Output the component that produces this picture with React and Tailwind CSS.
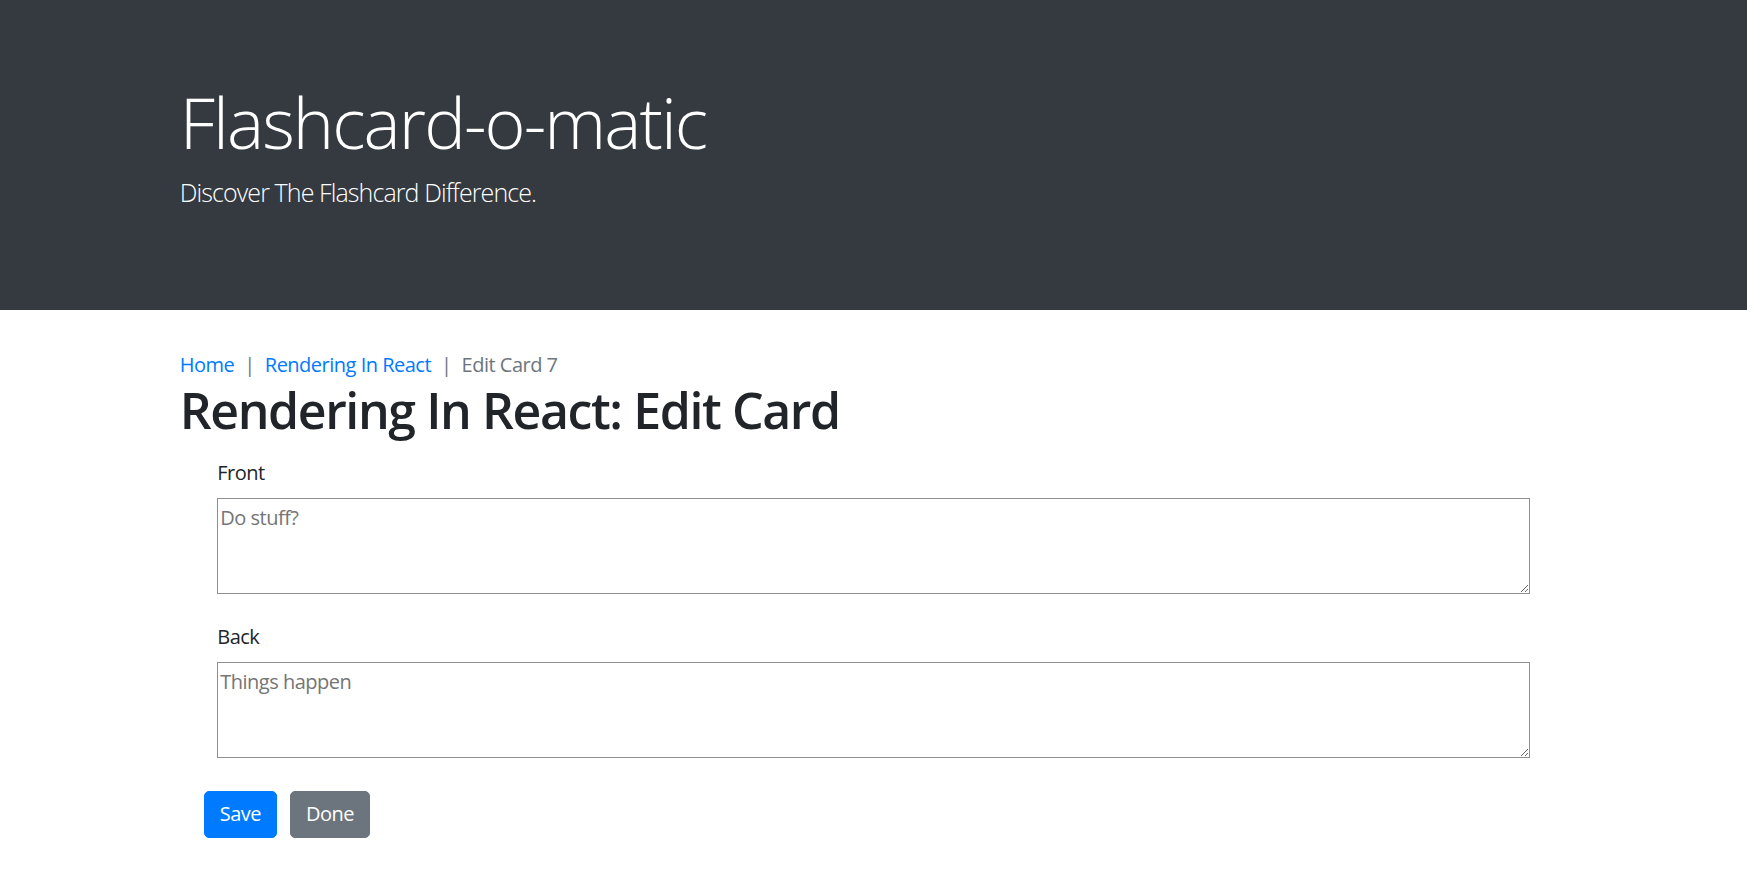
export default function App() {
    return (
        <div className="min-h-screen bg-white text-[#212529] text-[20px] leading-[1.5] tracking-[-0.5px] font-['Open_Sans','Noto_Sans',sans-serif]">
            {/* Jumbotron */}
            <div className="bg-[#343a40] pt-[80px] pb-[78px] mb-[40px]">
                <div className="max-w-[1425px] mx-auto px-[18.75px]">
                    <h1 className="text-white text-[70px] font-light leading-[84px] tracking-[-1.9px] mb-[10px]">
                        Flashcard-o-matic
                    </h1>
                    <p className="text-white text-[25px] font-light leading-[37.5px] tracking-[-0.9px] mb-[20px]">
                        Discover The Flashcard Difference.
                    </p>
                </div>
            </div>

            <div className="max-w-[1425px] mx-auto px-[18.75px]">
                {/* Breadcrumb */}
                <nav className="flex items-center leading-[30px]">
                    <a href="#" className="text-[#007bff]">Home</a>
                    <span className="text-[#6c757d] px-[10px]">|</span>
                    <a href="#" className="text-[#007bff]">Rendering In React</a>
                    <span className="text-[#6c757d] px-[10px]">|</span>
                    <span className="text-[#6c757d]">Edit Card 7</span>
                </nav>

                <h2 className="text-[50px] font-semibold leading-[60px] tracking-[-1.4px] mb-[9px]">
                    Rendering In React: Edit Card
                </h2>

                <form className="pt-[9px]">
                    <div className="mx-[37.5px] mb-[28px]">
                        <label htmlFor="front" className="block mb-[10px] leading-[30px]">Front</label>
                        <textarea
                            id="front"
                            rows={3}
                            placeholder="Do stuff?"
                            className="block w-full h-[96px] border border-[#8f8f8f] px-[2px] pt-[4px] pb-[1px] leading-[30px] text-[20px] tracking-[-0.5px] placeholder:text-[#757575] resize-y"
                        />
                    </div>
                    <div className="mx-[37.5px] mb-[33px]">
                        <label htmlFor="back" className="block mb-[10px] leading-[30px]">Back</label>
                        <textarea
                            id="back"
                            rows={3}
                            placeholder="Things happen"
                            className="block w-full h-[96px] border border-[#8f8f8f] px-[2px] pt-[4px] pb-[1px] leading-[30px] text-[20px] tracking-[-0.5px] placeholder:text-[#757575] resize-y"
                        />
                    </div>
                    <div className="flex gap-[13px] ml-[24px]">
                        <button type="button" className="bg-[#007bff] text-white rounded-[5px] px-[15px] py-[7.5px] leading-[30px] border border-[#007bff]">
                            Save
                        </button>
                        <button type="button" className="bg-[#6c757d] text-white rounded-[5px] px-[15px] py-[7.5px] leading-[30px] border border-[#6c757d]">
                            Done
                        </button>
                    </div>
                </form>
            </div>
        </div>
    );
}
